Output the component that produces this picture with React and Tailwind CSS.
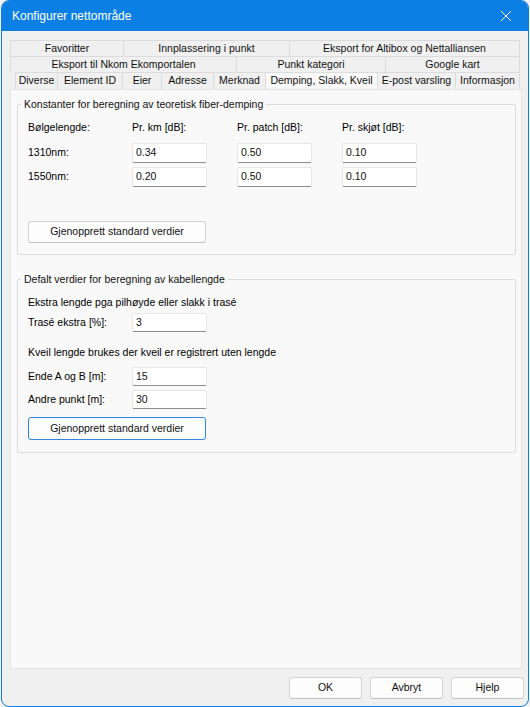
import React from "react";

const font = { fontFamily: '"Liberation Sans", Arial, sans-serif' };

function Field({ value, h = "h-[20px]" }) {
  return (
    <div
      className={`w-[75px] ${h} bg-white border border-[#e6e6e6] border-b-[#8d8d8d] rounded-[2px] pl-[3px] flex items-center text-[#111]`}
    >
      {value}
    </div>
  );
}

function Btn({ children, focused, w = "w-[178px]", h = "h-[22px]" }) {
  return (
    <div
      className={`${w} ${h} flex items-center justify-center rounded-[3px] bg-[#fdfdfd] border ${
        focused ? "border-[#2e86de]" : "border-[#d4d4d4] border-b-[#c2c2c2]"
      } text-[#111]`}
    >
      {children}
    </div>
  );
}

function Tab({ w, label, active, last }) {
  return (
    <div
      className={`${w} h-full flex items-center justify-center border-l border-t border-[#dcdcdc] ${
        last ? "border-r" : ""
      } ${active ? "bg-[#f9f9f9] relative z-10 -mb-px" : "bg-[#f0f0f0]"}`}
    >
      {label}
    </div>
  );
}

function Group({ title, children, className = "" }) {
  return (
    <fieldset
      className={`ml-[6px] mr-[5px] border border-[#dcdcdc] rounded-[2px] px-[10px] ${className}`}
    >
      <legend className="-ml-[7px] px-[3px] leading-[14px] text-[#111]">{title}</legend>
      {children}
    </fieldset>
  );
}

export default function App() {
  return (
    <div className="w-[530px] h-[707px] bg-[#f3f3f3] text-[10.5px]" style={font}>
      <div className="ml-px w-[528px] h-[707px] flex flex-col border border-[#0c7fe4] rounded-[8px] overflow-hidden bg-[#f0f0f0]">
        {/* title bar */}
        <div className="h-[30px] shrink-0 bg-[#0c7fe4] flex items-center justify-between pl-[10px] pr-[10px]">
          <span className="text-white text-[12px]">Konfigurer nettområde</span>
          <svg width="12" height="12" viewBox="0 0 12 12" className="mr-[6px]">
            <path d="M1 1 L11 11 M11 1 L1 11" stroke="white" strokeWidth="1" fill="none" />
          </svg>
        </div>

        {/* tabs + panel */}
        <div className="flex-1 flex flex-col pt-[9px] pl-[8px] pr-[6px]">
          <div className="w-[510px] text-[#111]">
            <div className="flex h-[16px]">
              <Tab w="w-[113px]" label="Favoritter" />
              <Tab w="w-[166px]" label="Innplassering i punkt" />
              <Tab w="w-[231px]" label="Eksport for Altibox og Nettalliansen" last />
            </div>
            <div className="flex h-[16px]">
              <Tab w="w-[226px]" label="Eksport til Nkom Ekomportalen" />
              <Tab w="w-[149px]" label="Punkt kategori" />
              <Tab w="w-[135px]" label="Google kart" last />
            </div>
            <div className="flex h-[17px] ml-[5px]">
              <Tab w="w-[42px]" label="Diverse" />
              <Tab w="w-[65px]" label="Element ID" />
              <Tab w="w-[39px]" label="Eier" />
              <Tab w="w-[52px]" label="Adresse" />
              <Tab w="w-[52px]" label="Merknad" />
              <Tab w="w-[112px]" label="Demping, Slakk, Kveil" active />
              <Tab w="w-[78px]" label="E-post varsling" />
              <Tab w="w-[65px]" label="Informasjon" last />
            </div>
          </div>

          <div className="flex-1 bg-[#f9f9f9] border border-[#e3e3e3] pt-[7px]">
            <Group title="Konstanter for beregning av teoretisk fiber-demping" className="pb-[11px]">
              <div className="grid grid-cols-[104px_105px_105px_75px] items-center">
                <div className="leading-[14px] mt-[9px]">Bølgelengde:</div>
                <div className="leading-[14px] mt-[9px]">Pr. km [dB]:</div>
                <div className="leading-[14px] mt-[9px]">Pr. patch [dB]:</div>
                <div className="leading-[14px] mt-[9px]">Pr. skjøt [dB]:</div>

                <div className="mt-[9px]">1310nm:</div>
                <div className="mt-[9px]"><Field value="0.34" /></div>
                <div className="mt-[9px]"><Field value="0.50" /></div>
                <div className="mt-[9px]"><Field value="0.10" /></div>

                <div className="mt-[4px]">1550nm:</div>
                <div className="mt-[4px]"><Field value="0.20" /></div>
                <div className="mt-[4px]"><Field value="0.50" /></div>
                <div className="mt-[4px]"><Field value="0.10" /></div>
              </div>
              <div className="mt-[34px]">
                <Btn>Gjenopprett standard verdier</Btn>
              </div>
            </Group>

            <Group title="Defalt verdier for beregning av kabellengde" className="mt-[17px] pb-[12px]">
              <div className="leading-[14px] mt-[9px]">Ekstra lengde pga pilhøyde eller slakk i trasé</div>
              <div className="flex items-center mt-[4px]">
                <div className="w-[104px]">Trasé ekstra [%]:</div>
                <Field value="3" h="h-[19px]" />
              </div>
              <div className="leading-[14px] mt-[13px]">Kveil lengde brukes der kveil er registrert uten lengde</div>
              <div className="flex items-center mt-[8px]">
                <div className="w-[104px]">Ende A og B [m]:</div>
                <Field value="15" h="h-[19px]" />
              </div>
              <div className="flex items-center mt-[4px]">
                <div className="w-[104px]">Andre punkt [m]:</div>
                <Field value="30" h="h-[19px]" />
              </div>
              <div className="mt-[8px]">
                <Btn focused h="h-[23px]">Gjenopprett standard verdier</Btn>
              </div>
            </Group>
          </div>
        </div>

        {/* footer buttons */}
        <div className="h-[37px] shrink-0 flex justify-end items-start gap-[8px] pt-[8px] pr-[4px]">
          <Btn w="w-[73px]">OK</Btn>
          <Btn w="w-[73px]">Avbryt</Btn>
          <Btn w="w-[73px]">Hjelp</Btn>
        </div>
      </div>
    </div>
  );
}
